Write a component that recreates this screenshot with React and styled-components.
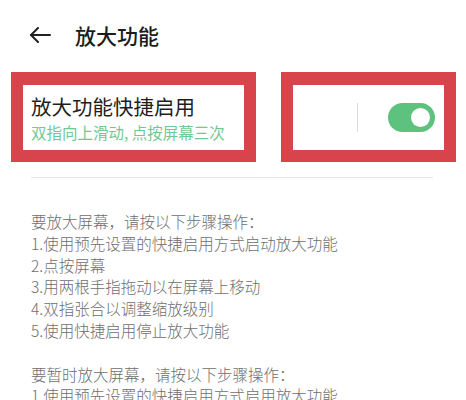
import styled, { createGlobalStyle } from "styled-components";

const GlobalStyle = createGlobalStyle`
  body {
    margin: 0;
    background: #ffffff;
    font-family: "Noto Sans CJK SC", "Noto Sans", sans-serif;
  }
`;

const Page = styled.div`
  width: 466px;
  height: 400px;
  overflow: hidden;
  background: #ffffff;
`;

const Header = styled.header`
  display: flex;
  align-items: center;
  height: 70px;
  padding-left: 29px;
  gap: 24px;
`;

const BackButton = styled.button`
  display: flex;
  align-items: center;
  padding: 0;
  border: none;
  background: none;
  color: #222222;
`;

const Title = styled.h1`
  margin: 0;
  font-size: 21px;
  font-weight: 500;
  color: #1c1c1c;
`;

const Row = styled.div`
  display: flex;
  gap: 25px;
  margin-top: 2px;
  padding: 0 10px 0 11px;
`;

const RedBox = styled.div`
  box-sizing: border-box;
  width: ${(p) => p.$width}px;
  height: 90px;
  border: 12px solid #d8444c;
  border-top-width: 13px;
  display: flex;
`;

const TextCell = styled.div`
  display: flex;
  flex-direction: column;
  padding: 8px 0 0 8px;
`;

const ItemTitle = styled.div`
  font-size: 20.5px;
  line-height: 26px;
  color: #1e1e1e;
`;

const ItemSub = styled.div`
  font-size: 15.5px;
  line-height: 26px;
  color: #72c893;
`;

const SwitchCell = styled.div`
  display: flex;
  align-items: center;
  padding-left: 64px;
  gap: 30px;
`;

const VLine = styled.div`
  width: 1px;
  height: 29px;
  background: #dcdcdc;
`;

const Toggle = styled.div`
  box-sizing: border-box;
  width: 47px;
  height: 29px;
  border-radius: 15px;
  background: ${(p) => (p.$on ? "#5dc27e" : "#cccccc")};
  display: flex;
  align-items: center;
  justify-content: ${(p) => (p.$on ? "flex-end" : "flex-start")};
  padding: 0 5px;
`;

const Knob = styled.div`
  width: 19px;
  height: 19px;
  border-radius: 50%;
  background: #ffffff;
`;

const Divider = styled.div`
  height: 1px;
  margin: 15px 33px 0 31px;
  background: #e6e6e6;
`;

const Body = styled.div`
  padding: 33px 0 0 31px;
  font-size: 15.5px;
  font-weight: 300;
  line-height: 21.8px;
  color: #6e6e6e;
`;

const Para = styled.p`
  margin: 0 0 21.8px;
`;

const steps1 = [
  "要放大屏幕，请按以下步骤操作：",
  "1.使用预先设置的快捷启用方式启动放大功能",
  "2.点按屏幕",
  "3.用两根手指拖动以在屏幕上移动",
  "4.双指张合以调整缩放级别",
  "5.使用快捷启用停止放大功能",
];

const steps2 = [
  "要暂时放大屏幕，请按以下步骤操作：",
  "1.使用预先设置的快捷启用方式启用放大功能",
];

export default function App() {
  return (
    <Page>
      <GlobalStyle />
      <Header>
        <BackButton>
          <svg width="22" height="16" viewBox="0 0 22 16" fill="none" stroke="currentColor" strokeWidth="2" strokeLinecap="round" strokeLinejoin="round">
            <path d="M21 8H2" />
            <path d="M9 1L2 8l7 7" />
          </svg>
        </BackButton>
        <Title>放大功能</Title>
      </Header>

      <Row>
        <RedBox $width={245}>
          <TextCell>
            <ItemTitle>放大功能快捷启用</ItemTitle>
            <ItemSub>双指向上滑动, 点按屏幕三次</ItemSub>
          </TextCell>
        </RedBox>
        <RedBox $width={175}>
          <SwitchCell>
            <VLine />
            <Toggle $on>
              <Knob />
            </Toggle>
          </SwitchCell>
        </RedBox>
      </Row>

      <Divider />

      <Body>
        <Para>
          {steps1.map((s) => (
            <div key={s}>{s}</div>
          ))}
        </Para>
        <Para>
          {steps2.map((s) => (
            <div key={s}>{s}</div>
          ))}
        </Para>
      </Body>
    </Page>
  );
}
